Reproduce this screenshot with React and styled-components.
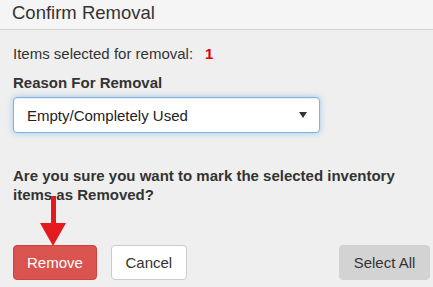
import styled, { createGlobalStyle } from "styled-components"

const GlobalStyle = createGlobalStyle`
    html, body {
        margin: 0;
        padding: 0;
        background: #efefef;
    }
    body {
        font-family: "Liberation Sans", Arial, sans-serif;
        color: #333;
    }
`

export default function App() {
    return (
        <>
            <GlobalStyle />
            <Modal>
                <Header>Confirm Removal</Header>
                <Body>
                    <Count>
                        Items selected for removal:<Num>1</Num>
                    </Count>
                    <Label>Reason For Removal</Label>
                    <Select>
                        <span>Empty/Completely Used</span>
                        <Caret />
                    </Select>
                    <Question>
                        Are you sure you want to mark the selected inventory items as Removed?
                    </Question>
                    <Footer>
                        <Group>
                            <Button variant="danger">Remove</Button>
                            <Button>Cancel</Button>
                        </Group>
                        <Button variant="grey">Select All</Button>
                    </Footer>
                </Body>
                <Arrow width="30" height="52" viewBox="0 0 30 52">
                    <rect x="13" y="0" width="5" height="28" fill="#e41b1e" />
                    <polygon points="2,27 28,27 15,50" fill="#e41b1e" />
                </Arrow>
            </Modal>
        </>
    )
}

const Modal = styled.div`
    position: relative;
    width: 433px;
    height: 287px;
    background: #efefef;
    overflow: hidden;
`
const Header = styled.div`
    height: 30px;
    box-sizing: border-box;
    padding: 0 12px;
    background: #f5f5f5;
    border-bottom: 1px solid #d2d2d2;
    font-size: 18.5px;
    line-height: 25px;
    color: #333;
`
const Body = styled.div`
    padding: 14px 3px 0 13px;
    display: flex;
    flex-direction: column;
`
const Count = styled.div`
    font-size: 15px;
    line-height: 20px;
`
const Num = styled.span`
    color: #e00000;
    font-weight: 700;
    margin-left: 12px;
`
const Label = styled.div`
    margin-top: 9px;
    font-size: 15px;
    line-height: 20px;
    font-weight: 700;
`
const Select = styled.div`
    margin-top: 4px;
    width: 307px;
    height: 36px;
    box-sizing: border-box;
    display: flex;
    align-items: center;
    justify-content: space-between;
    padding: 0 12px 0 13px;
    background: #fff;
    border: 1px solid #7fb4e2;
    border-radius: 4px;
    box-shadow: inset 0 1px 1px rgba(0,0,0,.075), 0 0 6px rgba(102,175,233,.6);
    font-size: 15px;
    color: #222;
`
const Caret = styled.span`
    width: 0;
    height: 0;
    border-left: 4.5px solid transparent;
    border-right: 4.5px solid transparent;
    border-top: 6px solid #333;
`
const Question = styled.div`
    margin-top: 33px;
    width: 400px;
    font-size: 15px;
    line-height: 19px;
    font-weight: 700;
`
const Footer = styled.div`
    margin-top: 41px;
    display: flex;
    justify-content: space-between;
`
const Group = styled.div`
    display: flex;
    gap: 14px;
`
const Button = styled.button`
    height: 35px;
    padding: 0 13px;
    font-family: "Liberation Sans", Arial, sans-serif;
    font-size: 15px;
    border-radius: 4px;
    border: 1px solid ${p => p.variant === "danger" ? "#d43f3a" : p.variant === "grey" ? "#d3d3d3" : "#ccc"};
    background: ${p => p.variant === "danger" ? "#d9534f" : p.variant === "grey" ? "#d3d3d3" : "#fff"};
    color: ${p => p.variant === "danger" ? "#fff" : "#333"};
    min-width: ${p => p.variant === "danger" ? "83px" : p.variant === "grey" ? "91px" : "76px"};
`
const Arrow = styled.svg`
    position: absolute;
    left: 38px;
    top: 196px;
`
